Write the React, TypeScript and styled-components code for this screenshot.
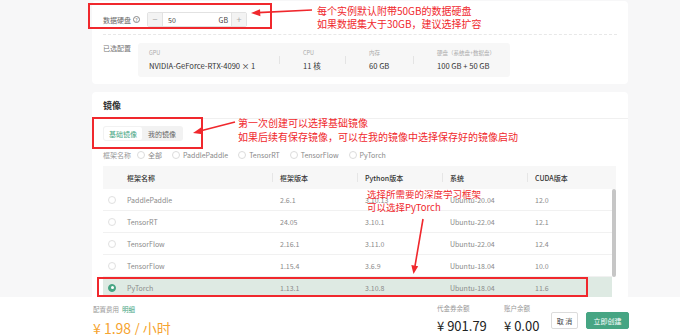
import React from "react";
import styled, { createGlobalStyle } from "styled-components";

const GlobalStyle = createGlobalStyle`
  html, body { margin: 0; padding: 0; background: #fff; }
  body { font-family: "Noto Sans CJK SC", "Noto Sans", sans-serif; color: #333; }
  * { box-sizing: border-box; }
`;

const GREEN = "#46a583";
const RED = "#f0282d";

const Page = styled.div`
  position: relative;
  width: 693px;
  height: 335px;
  overflow: hidden;
  display: flex;
  flex-direction: column;
`;

const Main = styled.div`
  height: 297px;
  display: flex;
  overflow: hidden;
  background: #f7f7f8;
`;

const Content = styled.div`
  margin-left: 92px;
  width: 536px;
  padding-top: 1px;
  display: flex;
  flex-direction: column;
  gap: 8px;
`;

const Gutter = styled.div`
  flex: 1;
`;

const SideStrip = styled.div`
  width: 13px;
  background: #fff;
`;

const Card = styled.section`
  background: #fff;
  border-radius: 4px;
  flex-shrink: 0;
`;

const DiskRow = styled.div`
  display: flex;
  align-items: center;
  height: 34px;
  margin: 0 11px;
  padding: 11px 0 7px;
  border-bottom: 1px dashed #e8e8e8;
  gap: 7px;
`;

const FieldLabel = styled.span`
  font-size: 7px;
  line-height: 10px;
  color: #666;
  display: inline-flex;
  align-items: center;
  gap: 2px;
  white-space: nowrap;
`;

const Help = styled.span`
  display: inline-flex;
  align-items: center;
  justify-content: center;
  width: 7px;
  height: 7px;
  border: 0.8px solid #888;
  border-radius: 50%;
  font-size: 5px;
  line-height: 1;
  color: #777;
`;

const Stepper = styled.div`
  display: flex;
  width: 100px;
  height: 15px;
  border: 1px solid #e2e2e2;
  border-radius: 2px;
  overflow: hidden;
`;

const StepBtn = styled.div<{ $side: "l" | "r" }>`
  width: 15px;
  background: #f3f3f3;
  color: #aaa;
  font-size: 9px;
  display: flex;
  align-items: center;
  justify-content: center;
  border-${(p) => (p.$side === "l" ? "right" : "left")}: 1px solid #e2e2e2;
`;

const StepValue = styled.div`
  flex: 1;
  display: flex;
  align-items: center;
  justify-content: space-between;
  padding: 0 3px 0 5px;
  font-size: 7px;
  color: #444;
`;

const ConfigRow = styled.div`
  display: flex;
  align-items: flex-start;
  gap: 7px;
  padding: 8px 11px 7px;
`;

const ConfigLabel = styled.span`
  font-size: 7px;
  line-height: 10px;
  color: #777;
`;

const SpecBox = styled.div`
  width: 372px;
  height: 34px;
  background: #f7f7f7;
  border-radius: 3px;
  display: flex;
  align-items: flex-start;
`;

const Spec = styled.div<{ $w?: number; $first?: boolean }>`
  ${(p) => (p.$w ? `width: ${p.$w}px;` : "flex: 1;")}
  padding: 6px 0 0 ${(p) => (p.$first ? 11 : 23)}px;
  display: flex;
  flex-direction: column;
  gap: 4px;
`;

const SpecLabel = styled.span`
  font-size: 5.5px;
  line-height: 8px;
  color: #aaa;
  white-space: nowrap;
`;

const SpecValue = styled.span`
  font-size: 7.6px;
  line-height: 10px;
  color: #333;
  white-space: nowrap;
`;

const SpecSep = styled.div`
  width: 1px;
  height: 8px;
  margin-top: 13px;
  background: #e4e4e4;
`;

const CardHeader = styled.div`
  height: 27px;
  padding: 0 11px;
  display: flex;
  align-items: center;
  border-bottom: 1px solid #f0f0f0;
  font-size: 9px;
  font-weight: 700;
  color: #333;
`;

const CardBody = styled.div`
  padding: 7px 11px 0;
  display: flex;
  flex-direction: column;
  align-items: flex-start;
`;

const Tabs = styled.div`
  display: flex;
  height: 15px;
  padding: 1px;
  background: #f2f2f2;
  border-radius: 3px;
`;

const Tab = styled.div<{ $active?: boolean }>`
  display: flex;
  align-items: center;
  padding: 0 ${(p) => (p.$active ? 5 : 6)}px;
  font-size: 7px;
  border-radius: 2px;
  background: ${(p) => (p.$active ? "#fff" : "transparent")};
  color: ${(p) => (p.$active ? GREEN : "#666")};
`;

const FilterRow = styled.div`
  display: flex;
  align-items: center;
  height: 12px;
  margin-top: 8px;
  gap: 6px;
  font-size: 7px;
  color: #999;
`;

const FilterItem = styled.label`
  display: inline-flex;
  align-items: center;
  gap: 3px;
  margin-right: 4px;
  color: #888;
`;

const Check = styled.span`
  width: 8px;
  height: 8px;
  border: 1px solid #dcdcdc;
  border-radius: 50%;
  background: #fff;
`;

const Table = styled.div`
  margin-top: 5px;
  width: 513px;
`;

const COLS = "169px 85px 85px 85px 1fr";

const HeadRow = styled.div`
  display: grid;
  grid-template-columns: ${COLS};
  height: 23px;
  background: #f7f7f7;
`;

const HeadCell = styled.div<{ $first?: boolean }>`
  position: relative;
  display: flex;
  align-items: center;
  padding-left: ${(p) => (p.$first ? 24 : 8)}px;
  font-size: 7px;
  font-weight: 500;
  color: #333;
  ${(p) =>
    p.$first
      ? ""
      : `&::before { content: ""; position: absolute; left: 0; top: 7px; width: 1px; height: 9px; background: #e6e6e6; }`}
`;

const BodyWrap = styled.div`
  display: flex;
`;

const Rows = styled.div`
  flex: 1;
`;

const Track = styled.div`
  width: 4px;
`;

const Thumb = styled.div`
  height: 88px;
  background: #c6c6c6;
  border-radius: 2px;
`;

const Row = styled.div<{ $selected?: boolean }>`
  display: grid;
  grid-template-columns: ${COLS};
  height: 22px;
  border-bottom: 1px solid #f1f1f1;
  background: ${(p) => (p.$selected ? "#deeae3" : "#fff")};
`;

const Cell = styled.div<{ $first?: boolean }>`
  display: flex;
  align-items: center;
  padding-left: ${(p) => (p.$first ? 5 : 8)}px;
  gap: 11px;
  font-size: 7px;
  color: #8a8a8a;
  white-space: nowrap;
`;

const Radio = styled.span<{ $on?: boolean }>`
  width: 8px;
  height: 8px;
  border-radius: 50%;
  flex-shrink: 0;
  border: 1px solid ${(p) => (p.$on ? GREEN : "#e0e0e0")};
  background: ${(p) => (p.$on ? GREEN : "#fff")};
  display: flex;
  align-items: center;
  justify-content: center;
  &::after {
    content: "";
    width: 3px;
    height: 3px;
    border-radius: 50%;
    background: ${(p) => (p.$on ? "#fff" : "transparent")};
  }
`;

const Footer = styled.footer`
  height: 38px;
  background: #fff;
  display: flex;
  align-items: flex-start;
  padding: 0 64px 0 93px;
`;

const Cost = styled.div`
  padding-top: 8px;
  display: flex;
  flex-direction: column;
  gap: 7px;
`;

const SmallLabel = styled.span`
  font-size: 6.5px;
  line-height: 9px;
  color: #999;
  white-space: nowrap;
`;

const Detail = styled.span`
  color: ${GREEN};
  margin-left: 3px;
`;

const Price = styled.span`
  font-size: 14px;
  line-height: 15px;
  color: #f6a430;
  white-space: nowrap;
`;

const Spacer = styled.div`
  flex: 1;
`;

const Balance = styled.div<{ $w: number }>`
  width: ${(p) => p.$w}px;
  padding-top: 7px;
  display: flex;
  flex-direction: column;
  gap: 5px;
`;

const Amount = styled.span`
  font-size: 13px;
  line-height: 15px;
  color: #222;
  white-space: nowrap;
`;

const Button = styled.button<{ $primary?: boolean }>`
  margin-top: 15px;
  height: 17px;
  padding: 0;
  width: ${(p) => (p.$primary ? 43 : 27)}px;
  margin-left: ${(p) => (p.$primary ? 8 : 0)}px;
  border-radius: 2px;
  font-family: inherit;
  font-size: 7px;
  border: 1px solid ${(p) => (p.$primary ? GREEN : "#dcdcdc")};
  background: ${(p) => (p.$primary ? GREEN : "#fff")};
  color: ${(p) => (p.$primary ? "#fff" : "#444")};
`;

/* ---------- annotation overlay ---------- */

const Overlay = styled.div`
  position: absolute;
  inset: 0;
  pointer-events: none;
`;

const RedBox = styled.div<{ $x: number; $y: number; $w: number; $h: number }>`
  position: absolute;
  left: ${(p) => p.$x}px;
  top: ${(p) => p.$y}px;
  width: ${(p) => p.$w}px;
  height: ${(p) => p.$h}px;
  border: 2px solid ${RED};
`;

const Note = styled.div<{ $x: number; $y: number; $fs: number; $lh: number }>`
  position: absolute;
  left: ${(p) => p.$x}px;
  top: ${(p) => p.$y}px;
  font-size: ${(p) => p.$fs}px;
  line-height: ${(p) => p.$lh}px;
  color: ${RED};
  white-space: nowrap;
`;

const Arrows = styled.svg`
  position: absolute;
  left: 0;
  top: 0;
`;

type R = { name: string; ver: string; py: string; os: string; cuda: string; sel?: boolean };
const rows: R[] = [
  { name: "PaddlePaddle", ver: "2.6.1", py: "3.10.13", os: "Ubuntu-20.04", cuda: "12.0" },
  { name: "TensorRT", ver: "24.05", py: "3.10.1", os: "Ubuntu-22.04", cuda: "12.1" },
  { name: "TensorFlow", ver: "2.16.1", py: "3.11.0", os: "Ubuntu-22.04", cuda: "12.4" },
  { name: "TensorFlow", ver: "1.15.4", py: "3.6.9", os: "Ubuntu-18.04", cuda: "10.0" },
  { name: "PyTorch", ver: "1.13.1", py: "3.10.8", os: "Ubuntu-18.04", cuda: "11.6", sel: true },
];

export default function App() {
  return (
    <Page>
      <GlobalStyle />
      <Main>
        <Content>
          <Card>
            <DiskRow>
              <FieldLabel>
                数据硬盘 <Help>?</Help>
              </FieldLabel>
              <Stepper>
                <StepBtn $side="l">−</StepBtn>
                <StepValue>
                  <span>50</span>
                  <span>GB</span>
                </StepValue>
                <StepBtn $side="r">+</StepBtn>
              </Stepper>
            </DiskRow>
            <ConfigRow>
              <ConfigLabel>已选配置</ConfigLabel>
              <SpecBox>
                <Spec $w={141} $first>
                  <SpecLabel>GPU</SpecLabel>
                  <SpecValue>NVIDIA-GeForce-RTX-4090 × 1</SpecValue>
                </Spec>
                <SpecSep />
                <Spec $w={65}>
                  <SpecLabel>CPU</SpecLabel>
                  <SpecValue>11 核</SpecValue>
                </Spec>
                <SpecSep />
                <Spec $w={67}>
                  <SpecLabel>内存</SpecLabel>
                  <SpecValue>60 GB</SpecValue>
                </Spec>
                <SpecSep />
                <Spec>
                  <SpecLabel>硬盘（系统盘+数据盘）</SpecLabel>
                  <SpecValue>100 GB + 50 GB</SpecValue>
                </Spec>
              </SpecBox>
            </ConfigRow>
          </Card>
          <Card>
            <CardHeader>镜像</CardHeader>
            <CardBody>
              <Tabs>
                <Tab $active>基础镜像</Tab>
                <Tab>我的镜像</Tab>
              </Tabs>
              <FilterRow>
                <span>框架名称</span>
                {["全部", "PaddlePaddle", "TensorRT", "TensorFlow", "PyTorch"].map((t) => (
                  <FilterItem key={t}>
                    <Check />
                    {t}
                  </FilterItem>
                ))}
              </FilterRow>
              <Table>
                <HeadRow>
                  <HeadCell $first>框架名称</HeadCell>
                  <HeadCell>框架版本</HeadCell>
                  <HeadCell>Python版本</HeadCell>
                  <HeadCell>系统</HeadCell>
                  <HeadCell>CUDA版本</HeadCell>
                </HeadRow>
                <BodyWrap>
                  <Rows>
                    {rows.map((r, i) => (
                      <Row key={i} $selected={r.sel}>
                        <Cell $first>
                          <Radio $on={r.sel} />
                          {r.name}
                        </Cell>
                        <Cell>{r.ver}</Cell>
                        <Cell>{r.py}</Cell>
                        <Cell>{r.os}</Cell>
                        <Cell>{r.cuda}</Cell>
                      </Row>
                    ))}
                  </Rows>
                  <Track>
                    <Thumb />
                  </Track>
                </BodyWrap>
              </Table>
            </CardBody>
          </Card>
        </Content>
        <Gutter />
        <SideStrip />
      </Main>
      <Footer>
        <Cost>
          <SmallLabel>
            配置费用<Detail>明细</Detail>
          </SmallLabel>
          <Price>¥ 1.98 / 小时</Price>
        </Cost>
        <Spacer />
        <Balance $w={67}>
          <SmallLabel>代金券余额</SmallLabel>
          <Amount>¥ 901.79</Amount>
        </Balance>
        <Balance $w={47}>
          <SmallLabel>账户余额</SmallLabel>
          <Amount>¥ 0.00</Amount>
        </Balance>
        <Button>取 消</Button>
        <Button $primary>立即创建</Button>
      </Footer>

      <Overlay>
        <RedBox $x={88} $y={3} $w={184} $h={26} />
        <RedBox $x={92} $y={117} $w={111} $h={32} />
        <RedBox $x={97} $y={277} $w={491} $h={20} />
        <Note $x={317} $y={4} $fs={10} $lh={13}>
          每个实例默认附带50GB的数据硬盘
          <br />
          如果数据集大于30GB，建议选择扩容
        </Note>
        <Note $x={238} $y={116} $fs={10} $lh={14}>
          第一次创建可以选择基础镜像
          <br />
          如果后续有保存镜像，可以在我的镜像中选择保存好的镜像启动
        </Note>
        <Note $x={367} $y={188} $fs={9.5} $lh={13}>
          选择所需要的深度学习框架
          <br />
          可以选择PyTorch
        </Note>
        <Arrows width="693" height="335" viewBox="0 0 693 335">
          <g stroke={RED} strokeWidth="1.6" fill={RED}>
            <line x1="312" y1="10" x2="258" y2="12.6" />
            <polygon points="251,13 260,9.2 260.4,16.2" stroke="none" />
            <line x1="235" y1="122" x2="200" y2="131" />
            <polygon points="193,133 201,127.5 202.7,134.3" stroke="none" />
            <line x1="423" y1="219" x2="415" y2="266" />
            <polygon points="413.5,274 411.3,265 418.2,266.2" stroke="none" />
          </g>
        </Arrows>
      </Overlay>
    </Page>
  );
}
